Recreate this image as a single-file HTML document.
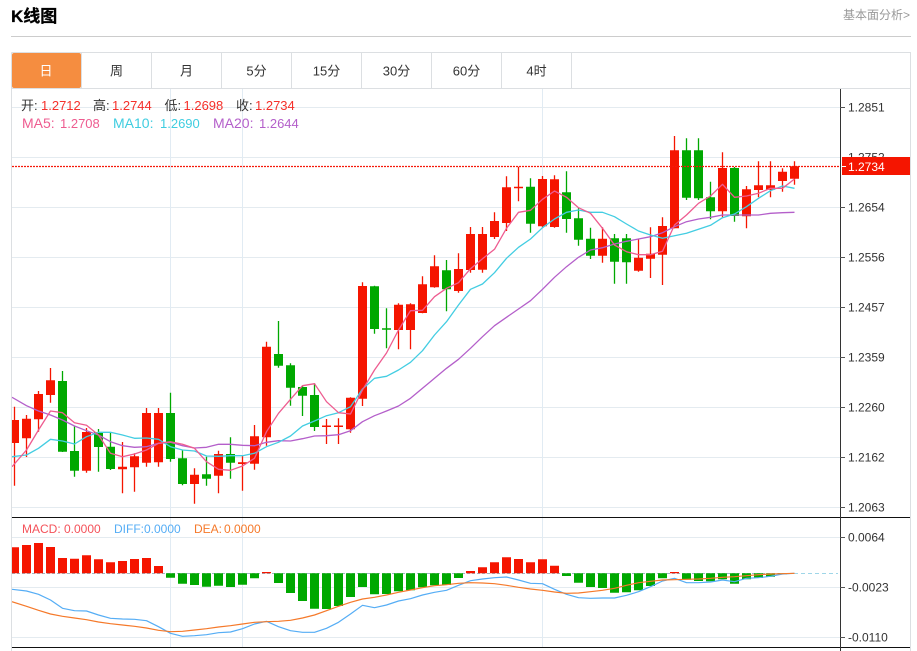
<!DOCTYPE html>
<html lang="zh"><head><meta charset="utf-8"><title>K线图</title>
<style>
html,body{margin:0;padding:0;background:#fff;width:917px;height:651px;overflow:hidden}
svg{position:absolute;left:0;top:0;display:block}
text{font-family:"Liberation Sans","Noto Sans CJK SC",sans-serif}
</style></head><body>
<svg width="917" height="651" viewBox="0 0 917 651" xmlns="http://www.w3.org/2000/svg">
<defs><clipPath id="c"><rect x="12" y="89" width="828" height="558"/></clipPath></defs>

<text x="11" y="22" font-size="17" font-weight="700" fill="#000" stroke="#000" stroke-width="0.3">K线图</text>
<text x="843" y="19" font-size="12" fill="#999">基本面分析&gt;</text>
<path d="M11 36.500H911" stroke="#ccc" fill="none"/>

<!-- tabs frame -->
<path d="M11.500 52.500H910.500V651M11.500 52.500V651M11 88.500H911" stroke="#dcdfe2" fill="none"/>
<path d="M81.500 53V88M151.500 53V88M221.500 53V88M291.500 53V88M361.500 53V88M431.500 53V88M501.500 53V88M571.500 53V88" stroke="#dcdfe2" fill="none"/>
<rect x="12" y="53" width="69" height="35" rx="2" fill="#f58d40"/>
<g font-size="13" text-anchor="middle" fill="#333">
<text x="46" y="75.500" fill="#fff">日</text>
<text x="116.500" y="75.500">周</text>
<text x="186.500" y="75.500">月</text>
<text x="256.500" y="75.500">5分</text>
<text x="326.500" y="75.500">15分</text>
<text x="396.500" y="75.500">30分</text>
<text x="466.500" y="75.500">60分</text>
<text x="536.500" y="75.500">4时</text>
</g>

<!-- grid -->
<path d="M12 107.500H840M12 157.500H840M12 207.500H840M12 257.500H840M12 307.500H840M12 357.500H840M12 407.500H840M12 457.500H840M12 507.500H840M12 537.500H840M12 587.500H840M12 637.500H840" stroke="#e4ebf0" fill="none"/>
<path d="M170.500 89V647M242.500 89V647M542.500 89V647" stroke="#e1ebf3" fill="none"/>

<g clip-path="url(#c)">
<!-- red wicks -->
<path stroke="#f51500" stroke-width="1.300" fill="none" d="M14.500 406.700V485.700M26.500 415V457M38.500 391V431.700M50.500 368V402.700M86.500 428V472.700M122.500 442V493.300M134.500 453.300V491.700M146.500 408V466.700M158.500 408V466.700M194.500 468.300V503.700M218.500 450.700V493.300M242.500 456V490.700M254.500 425V469.700M266.500 341.700V445.700M326.500 419V444M338.500 418.300V444M350.500 397.300V432.700M362.500 282.300V406M398.500 303.300V349.300M410.500 303.300V349.300M422.500 276.300V313.300M434.500 255.300V287.700M458.500 253.300V292.700M470.500 227V272.700M482.500 227V272.700M494.500 212.300V239M506.500 176.300V231M518.500 166.700V201.300M542.500 176V227.700M554.500 175.300V227.700M602.500 227.300V262.700M638.500 239.300V271.700M650.500 227.300V278M662.500 217.300V285M674.500 136V228.300M722.500 152.300V217.300M746.500 186V228.300M758.500 161.300V197.300M770.500 161.300V197.300M782.500 168.300V191.700M794.500 161.300V184.700"/>
<!-- red bodies -->
<path fill="#f51500" d="M10 420h9V443h-9zM22 418.700h9V438.300h-9zM34 394h9V419.300h-9zM46 380.300h9V395h-9zM82 432h9V470.700h-9zM118 466.700h9V469.300h-9zM130 456.300h9V467.300h-9zM142 413h9V462.700h-9zM154 413h9V462.300h-9zM190 474.700h9V484h-9zM214 454h9V475.700h-9zM238 462.300h9V464h-9zM250 436.300h9V463.700h-9zM262 346.700h9V437.300h-9zM322 425.500h9V427h-9zM334 425.500h9V427h-9zM346 397.700h9V429.300h-9zM358 286h9V398.700h-9zM394 304.700h9V330h-9zM406 304.300h9V330h-9zM418 284.300h9V313h-9zM430 266.300h9V287.300h-9zM454 269h9V291h-9zM466 234h9V270h-9zM478 234h9V269.700h-9zM490 221h9V237h-9zM502 187.300h9V223h-9zM514 186.700h9V188.300h-9zM538 179h9V226.300h-9zM550 179.300h9V227h-9zM598 238.700h9V255.700h-9zM634 257.700h9V270.700h-9zM646 253.700h9V258.700h-9zM658 226h9V254.700h-9zM670 150.300h9V228.300h-9zM718 168h9V211.300h-9zM742 189.300h9V216.300h-9zM754 185.300h9V190h-9zM766 185.300h9V189.700h-9zM778 171.700h9V181h-9zM790 166.300h9V178.700h-9z"/>
<!-- green wicks -->
<path stroke="#00a800" stroke-width="1.300" fill="none" d="M62.500 371V452M74.500 426V476.700M98.500 429V471.700M110.500 432.300V470M170.500 392.700V461.700M182.500 450V485.300M206.500 456.700V485.700M230.500 437.300V478.700M278.500 321V367.700M290.500 363.300V405.700M302.500 386V416M314.500 383.300V431M374.500 285.700V333.700M386.500 308.300V348.300M446.500 260V311.300M530.500 178.300V232.700M566.500 171.300V232.700M578.500 208.300V245.700M590.500 227.700V259M614.500 234V283.700M626.500 234V283.700M686.500 138.300V200M698.500 138.300V200M710.500 181.700V219.300M734.500 167V221.700"/>
<!-- green bodies -->
<path fill="#00a800" d="M58 381h9V451.700h-9zM70 451h9V470.700h-9zM94 432.300h9V447h-9zM106 446.700h9V469h-9zM166 413h9V459h-9zM178 458.300h9V484h-9zM202 474.300h9V478.700h-9zM226 454h9V462.700h-9zM274 354h9V365.700h-9zM286 365.300h9V387.700h-9zM298 387h9V395.700h-9zM310 395h9V427h-9zM370 286.300h9V329h-9zM382 328.200h9V329.800h-9zM442 270.300h9V289.300h-9zM526 186.700h9V223.700h-9zM562 192.300h9V219h-9zM574 218.300h9V239.700h-9zM586 238.700h9V255.700h-9zM610 238.300h9V261.700h-9zM622 238.300h9V262.300h-9zM682 150.300h9V197.700h-9zM694 150.300h9V198.300h-9zM706 197.300h9V211.300h-9zM730 168h9V216h-9z"/>

<!-- MA20 -->
<path fill="none" stroke="#b45fca" stroke-width="1.300" stroke-linejoin="round" d="M12 397.300L26.500 405.700L38.500 411L50.500 415L62.500 420L74.500 426L86.500 430.700L98.500 435L110.500 441.700L122.500 445.700L134.500 447.300L146.500 446.700L158.500 443.300L170.500 442.300L182.500 445.700L194.500 448L206.500 447.300L218.500 444.300L230.500 444.300L242.500 445.300L254.500 445.700L266.500 442.300L278.500 440.700L290.500 441L302.500 438.700L314.500 436L326.500 435.700L338.500 434.700L350.500 430.700L362.500 421.700L374.500 415.700L386.500 411L398.500 406L410.500 398.300L422.500 388.300L434.500 378.300L446.500 368.300L458.500 359.300L470.500 348.300L482.500 336.700L494.500 325.700L506.500 317.300L518.500 309L530.500 300.700L542.500 289.300L554.500 277.300L566.500 266.700L578.500 257.300L590.500 250L602.500 247.700L614.500 244L626.500 241.300L638.500 239L650.500 236.700L662.500 232.700L674.500 226.700L686.500 221.700L698.500 219L710.500 217.300L722.500 215L734.500 215L746.500 215L758.500 215L770.500 213.300L782.500 212.700L794.500 212.300"/>
<!-- MA10 -->
<path fill="none" stroke="#43cde2" stroke-width="1.300" stroke-linejoin="round" d="M12 456.700L26.500 455L38.500 448.300L50.500 439.300L62.500 441L74.500 444L86.500 436.700L98.500 432.300L110.500 432.300L122.500 435L134.500 438.300L146.500 438L158.500 439.300L170.500 446.700L182.500 450L194.500 451L206.500 456L218.500 456.300L230.500 455.700L242.500 455.700L254.500 453.300L266.500 446.700L278.500 442.300L290.500 436L302.500 426L314.500 421L326.500 415.700L338.500 412.700L350.500 406.700L362.500 389L374.500 378.300L386.500 376.300L398.500 370L410.500 362.300L422.500 350.700L434.500 335L446.500 321.700L458.500 305L470.500 289.300L482.500 284L494.500 272.700L506.500 258.300L518.500 247.300L530.500 239L542.500 227.700L554.500 219L566.500 212.300L578.500 210L590.500 212.300L602.500 212.300L614.500 216.700L626.500 224L638.500 231L650.500 235L662.500 238.300L674.500 235.700L686.500 233.300L698.500 229.300L710.500 225.300L722.500 217.700L734.500 214L746.500 206.700L758.500 198.300L770.500 190.700L782.500 186L794.500 188.300"/>
<!-- MA5 -->
<path fill="none" stroke="#ee5c90" stroke-width="1.300" stroke-linejoin="round" d="M12 466.700L26.500 450L38.500 430L50.500 411L62.500 412.700L74.500 422.700L86.500 425.300L98.500 435L110.500 453.300L122.500 456.700L134.500 454L146.500 450L158.500 443.300L170.500 441.700L182.500 444.300L194.500 448.300L206.500 461.700L218.500 469.300L230.500 470.300L242.500 466L254.500 458.300L266.500 431.700L278.500 413.300L290.500 399.300L302.500 385.700L314.500 383.700L326.500 401.700L338.500 412.700L350.500 414L362.500 390L374.500 370L386.500 353L398.500 330L410.500 310.700L422.500 310.300L434.500 296.700L446.500 288.300L458.500 282.700L470.500 268.700L482.500 258.700L494.500 249.300L506.500 228.300L518.500 212.300L530.500 210.300L542.500 199.300L554.500 191L566.500 197.300L578.500 207.700L590.500 213.300L602.500 228.300L614.500 245L626.500 251.700L638.500 254.700L650.500 254.700L662.500 251.300L674.500 225L686.500 215L698.500 203.300L710.500 196L722.500 184.300L734.500 197.300L746.500 196L758.500 193.300L770.500 188.300L782.500 188.300L794.500 179"/>

<!-- price line -->
<path d="M12 166.500H840" stroke="#f5190a" stroke-width="1.200" stroke-dasharray="2 1" fill="none"/>

<!-- MACD zero -->
<path d="M12 573.500H794" stroke="#9fb7c4" stroke-dasharray="3 2" fill="none"/>
<path d="M794 573.500H838" stroke="#9fd6e8" stroke-dasharray="4 3" fill="none"/>
<!-- MACD bars -->
<path fill="#f51500" d="M10 547.300h9V573.300h-9zM22 545h9V573.300h-9zM34 543h9V573.300h-9zM46 547h9V573.300h-9zM58 558h9V573.300h-9zM70 558.700h9V573.300h-9zM82 555.300h9V573.300h-9zM94 559.300h9V573.300h-9zM106 562.300h9V573.300h-9zM118 561h9V573.300h-9zM130 559h9V573.300h-9zM142 558h9V573.300h-9zM154 566h9V573.300h-9zM262 572h9V573.300h-9zM466 571h9V573.300h-9zM478 567.300h9V573.300h-9zM490 562.300h9V573.300h-9zM502 557.300h9V573.300h-9zM514 559h9V573.300h-9zM526 562.300h9V573.300h-9zM538 559.300h9V573.300h-9zM550 565.700h9V573.300h-9zM670 572h9V573.300h-9z"/>
<path fill="#00a800" d="M166 573.300h9V577.700h-9zM178 573.300h9V583.700h-9zM190 573.300h9V585h-9zM202 573.300h9V586.700h-9zM214 573.300h9V585.700h-9zM226 573.300h9V587h-9zM238 573.300h9V584.700h-9zM250 573.300h9V578.300h-9zM274 573.300h9V583h-9zM286 573.300h9V593h-9zM298 573.300h9V601h-9zM310 573.300h9V608.700h-9zM322 573.300h9V609h-9zM334 573.300h9V606h-9zM346 573.300h9V597h-9zM358 573.300h9V587h-9zM370 573.300h9V594.300h-9zM382 573.300h9V594h-9zM394 573.300h9V591.300h-9zM406 573.300h9V590.300h-9zM418 573.300h9V587.300h-9zM430 573.300h9V585.300h-9zM442 573.300h9V585h-9zM454 573.300h9V578h-9zM562 573.300h9V576h-9zM574 573.300h9V582.700h-9zM586 573.300h9V587h-9zM598 573.300h9V588h-9zM610 573.300h9V592.700h-9zM622 573.300h9V592.300h-9zM634 573.300h9V590.300h-9zM646 573.300h9V586h-9zM658 573.300h9V578.300h-9zM682 573.300h9V579.700h-9zM694 573.300h9V581h-9zM706 573.300h9V581.300h-9zM718 573.300h9V579.300h-9zM730 573.300h9V583.700h-9zM742 573.300h9V579.300h-9zM754 573.300h9V578h-9zM766 573.300h9V576.700h-9zM778 573.300h9V574.300h-9z"/>
<!-- DIFF -->
<path fill="none" stroke="#55adf5" stroke-width="1.200" stroke-linejoin="round" d="M12 589.300L26.500 591L38.500 594.300L50.500 600L62.500 608.300L74.500 610.700L86.500 611L98.500 615L110.500 618.300L122.500 619L134.500 619.300L146.500 620.700L158.500 626.700L170.500 633.300L182.500 636.300L194.500 635.700L206.500 634.700L218.500 632.700L230.500 632L242.500 628.700L254.500 624L266.500 621.300L278.500 626.700L290.500 630.700L302.500 632.300L314.500 632.300L326.500 628.300L338.500 622.300L350.500 614L362.500 605.300L374.500 607.700L386.500 605L398.500 601L410.500 598.700L422.500 595L434.500 592.300L446.500 590.300L458.500 585.300L470.500 580.700L482.500 579L494.500 577.700L506.500 577L518.500 580L530.500 583.300L542.500 583.700L554.500 589.300L566.500 594.300L578.500 597.700L590.500 598.300L602.500 598L614.500 598L626.500 595.300L638.500 591.700L650.500 586.700L662.500 581L674.500 578.300L686.500 582.700L698.500 582.700L710.500 582L722.500 580L734.500 581.700L746.500 578.300L758.500 577.700L770.500 576.300L782.500 574L794.500 573.300"/>
<!-- DEA -->
<path fill="none" stroke="#f5792a" stroke-width="1.200" stroke-linejoin="round" d="M12 601.700L26.500 606.300L38.500 610.300L50.500 614L62.500 616.300L74.500 618L86.500 619.700L98.500 622L110.500 623.700L122.500 625L134.500 626.300L146.500 628L158.500 630.300L170.500 631.700L182.500 631.300L194.500 630L206.500 628.700L218.500 627L230.500 625.700L242.500 624L254.500 622.300L266.500 621.700L278.500 621.300L290.500 620.300L302.500 618L314.500 615L326.500 610.700L338.500 606.300L350.500 602.300L362.500 599L374.500 597.300L386.500 595L398.500 592.300L410.500 590L422.500 587.700L434.500 585.700L446.500 584.700L458.500 583.300L470.500 582.700L482.500 583L494.500 583.700L506.500 585.300L518.500 587.300L530.500 589L542.500 590.300L554.500 592L566.500 593.300L578.500 593L590.500 591.700L602.500 590.300L614.500 588.300L626.500 585.300L638.500 582.700L650.500 581.300L662.500 580L674.500 579.700L686.500 579.300L698.500 579L710.500 578.300L722.500 577.300L734.500 576.700L746.500 575.700L758.500 574.700L770.500 574L782.500 573.700L794.500 573.300"/>
</g>

<!-- axes -->
<path d="M12 517.500H910M12 647.500H910" stroke="#111" fill="none"/>
<path d="M840.500 89V651" stroke="#333" fill="none"/>
<path d="M840 107.500h5M840 207.500h5M840 257.500h5M840 307.500h5M840 357.500h5M840 407.500h5M840 457.500h5M840 507.500h5M840 537.500h5M840 587.500h5M840 637.500h5" stroke="#555" fill="none"/>

<g font-size="12" fill="#333">
<text x="848" y="111.500">1.2851</text>
<text x="848" y="161.500">1.2752</text>
<text x="848" y="211.500">1.2654</text>
<text x="848" y="261.500">1.2556</text>
<text x="848" y="311.500">1.2457</text>
<text x="848" y="361.500">1.2359</text>
<text x="848" y="411.500">1.2260</text>
<text x="848" y="461.500">1.2162</text>
<text x="848" y="511.500">1.2063</text>
<text x="848" y="541.500">0.0064</text>
<text x="848" y="591.500">-0.0023</text>
<text x="848" y="641.500">-0.0110</text>
</g>
<rect x="842" y="157" width="68" height="18" fill="#f51500"/>
<path d="M842 166.500h4" stroke="#fff" fill="none"/>
<text x="848" y="171" font-size="12" fill="#fff">1.2734</text>

<!-- legend -->
<g font-size="13">
<text x="21" y="110" fill="#333">开:</text><text x="41" y="110" fill="#f5302a">1.2712</text>
<text x="93" y="110" fill="#333">高:</text><text x="112" y="110" fill="#f5302a">1.2744</text>
<text x="164.500" y="110" fill="#333">低:</text><text x="183.500" y="110" fill="#f5302a">1.2698</text>
<text x="236" y="110" fill="#333">收:</text><text x="255" y="110" fill="#f5302a">1.2734</text>
<text x="22" y="128" font-size="14" fill="#ee5c90">MA5:</text><text x="60" y="128" fill="#ee5c90">1.2708</text>
<text x="113" y="128" font-size="14" fill="#3fcde0">MA10:</text><text x="160" y="128" fill="#3fcde0">1.2690</text>
<text x="213" y="128" font-size="14" fill="#b45fca">MA20:</text><text x="259" y="128" fill="#b45fca">1.2644</text>
</g>
<g font-size="12">
<text x="22" y="533" fill="#f4525a">MACD:</text><text x="64" y="533" fill="#f4525a">0.0000</text>
<text x="114" y="533" fill="#55adf5">DIFF:</text><text x="144" y="533" fill="#55adf5">0.0000</text>
<text x="194" y="533" fill="#f5792a">DEA:</text><text x="224" y="533" fill="#f5792a">0.0000</text>
</g>
</svg>
</body></html>
